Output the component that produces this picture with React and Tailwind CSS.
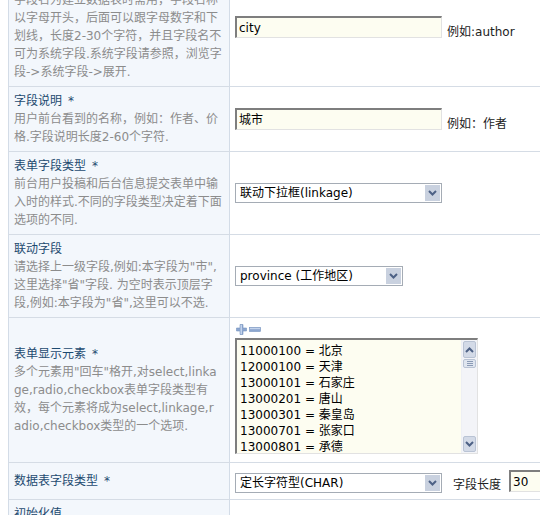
import React from "react";

const rows = [
  {
    title: "字段名",
    star: true,
    desc: [
      "字段名为建立数据表时需用，字段名称",
      "以字母开头，后面可以跟字母数字和下",
      "划线，长度2-30个字符，并且字段名不",
      "可为系统字段.系统字段请参照，浏览字",
      "段->系统字段->展开.",
    ],
    field: "name",
  },
  {
    title: "字段说明",
    star: true,
    desc: ["用户前台看到的名称，例如：作者、价", "格.字段说明长度2-60个字符."],
    field: "label",
  },
  {
    title: "表单字段类型",
    star: true,
    desc: [
      "前台用户投稿和后台信息提交表单中输",
      "入时的样式.不同的字段类型决定着下面",
      "选项的不同.",
    ],
    field: "formtype",
  },
  {
    title: "联动字段",
    desc: [
      "请选择上一级字段,例如:本字段为\"市\",",
      "这里选择\"省\"字段. 为空时表示顶层字",
      "段,例如:本字段为\"省\",这里可以不选.",
    ],
    field: "parent",
  },
  {
    title: "表单显示元素",
    star: true,
    desc: [
      "多个元素用\"回车\"格开,对select,linka",
      "ge,radio,checkbox表单字段类型有",
      "效，每个元素将成为select,linkage,r",
      "adio,checkbox类型的一个选项.",
    ],
    field: "options",
  },
  { title: "数据表字段类型", star: true, desc: [], field: "dbtype", pad: "py-[9px]" },
  { title: "初始化值", desc: ["字段的默认值,可以为空."], field: "none" },
];

const options = [
  "11000100 = 北京",
  "12000100 = 天津",
  "13000101 = 石家庄",
  "13000201 = 唐山",
  "13000301 = 秦皇岛",
  "13000701 = 张家口",
  "13000801 = 承德",
  "13000901 = 沧州",
];

function Chevron({ up }) {
  return (
    <svg width="9" height="6" viewBox="0 0 9 6">
      <path
        d={up ? "M1 5 L4.5 1.5 L8 5" : "M1 1 L4.5 4.5 L8 1"}
        fill="none"
        stroke="#4d6185"
        strokeWidth="2"
      />
    </svg>
  );
}

function TextBox({ value, width }) {
  return (
    <div
      className={`h-[22px] shrink-0 bg-[#fdfdf1] border-t-2 border-l-2 border-t-[#7e7e7e] border-l-[#7e7e7e] border-b border-r border-b-[#e2e2e2] border-r-[#e2e2e2] pl-[2px] flex items-center text-black ${width}`}
    >
      {value}
    </div>
  );
}

function DropDown({ value, width }) {
  return (
    <div className={`h-[20px] shrink-0 border border-[#a5acb5] bg-white flex items-center ${width}`}>
      <span className="flex-1 pl-[4px] whitespace-nowrap text-black">{value}</span>
      <div className="w-[17px] h-[18px] border border-white bg-[#c9d1df] flex items-center justify-center">
        <Chevron />
      </div>
    </div>
  );
}

function PlusMinus() {
  return (
    <div className="h-[15px] flex items-start gap-[2px] pl-[1px] pt-[1px]">
      <svg width="11" height="11" viewBox="0 0 11 11">
        <path d="M4 0.5 H7 V4 H10.5 V7 H7 V10.5 H4 V7 H0.5 V4 H4 Z" fill="#8ca6cf" stroke="#7693c0" strokeWidth="0.6" />
        <rect x="4.5" y="1" width="1.5" height="9" fill="#c3d3ec" />
      </svg>
      <svg width="12" height="11" viewBox="0 0 12 11">
        <rect x="0.5" y="3.5" width="11" height="4" fill="#8ca6cf" stroke="#7693c0" strokeWidth="0.6" />
        <rect x="1" y="4" width="10" height="1.2" fill="#c3d3ec" />
      </svg>
    </div>
  );
}

function OptionsBox() {
  return (
    <div className="w-[243px] h-[116px] flex bg-[#fdfdf1] border-t-2 border-l-2 border-t-[#7e7e7e] border-l-[#7e7e7e] border-b border-r border-b-[#e2e2e2] border-r-[#e2e2e2] overflow-hidden">
      <div className="flex-1 pl-[3px] pt-[3px] leading-[16px] text-black overflow-hidden">
        {options.map((o) => (
          <div key={o} className="whitespace-nowrap">{o}</div>
        ))}
      </div>
      {/* scrollbar */}
      <div className="w-[16px] flex flex-col bg-[#f3f4f8] border-l border-[#eef0f5]">
        <div className="h-[17px] m-[1px] rounded-[2px] border border-[#b9c3d4] bg-[#d3dae7] flex items-center justify-center">
          <Chevron up />
        </div>
        <div className="h-[9px] mx-[1px] rounded-[2px] border border-[#b9c3d4] bg-[#dfe5ef] flex flex-col items-center justify-center gap-[1px]">
          <div className="w-[6px] h-px bg-[#8a9ab5]" />
          <div className="w-[6px] h-px bg-[#8a9ab5]" />
          <div className="w-[6px] h-px bg-[#8a9ab5]" />
        </div>
        <div className="flex-1" />
        <div className="h-[16px] m-[1px] rounded-[2px] border border-[#b9c3d4] bg-[#d3dae7] flex items-center justify-center">
          <Chevron />
        </div>
      </div>
    </div>
  );
}

function Field({ field }) {
  if (field === "name")
    return (
      <div className="flex items-center gap-[5px]">
        <TextBox value="city" width="w-[207px]" />
        <span className="pt-[9px] whitespace-nowrap text-[#222]">例如:author</span>
      </div>
    );
  if (field === "label")
    return (
      <div className="flex items-center gap-[5px]">
        <TextBox value="城市" width="w-[207px]" />
        <span className="pt-[9px] whitespace-nowrap text-[#222]">例如：作者</span>
      </div>
    );
  if (field === "formtype") return <DropDown value="联动下拉框(linkage)" width="w-[207px]" />;
  if (field === "parent") return <DropDown value="province (工作地区)" width="w-[168px]" />;
  if (field === "options")
    return (
      <div className="pt-[5px] pb-[8px]">
        <PlusMinus />
        <OptionsBox />
      </div>
    );
  if (field === "dbtype")
    return (
      <div className="flex items-center">
        <div className="pt-[4px]">
          <DropDown value="定长字符型(CHAR)" width="w-[207px]" />
        </div>
        <span className="ml-[11px] mr-[8px] pt-[8px] whitespace-nowrap text-[#222]">字段长度</span>
        <TextBox value="30" width="w-[40px]" />
      </div>
    );
  return null;
}

export default function App() {
  return (
    <div className="w-[540px] h-[515px] overflow-hidden bg-white text-[12px] font-['DejaVu_Sans','Noto_Sans_CJK_SC',sans-serif]">
      <div className="-mt-[32px] ml-[8px] w-[600px]">
        {rows.map((r) => (
          <div key={r.title} className="flex border-b border-[#d5dce5]">
            <div
              className={`w-[222px] shrink-0 border-l border-r border-[#d3dce7] bg-[#f3f7fc] px-[5px] leading-[18px] flex flex-col justify-center ${r.pad || "py-[5px]"}`}
            >
              <div className="text-[#1d4a70] whitespace-nowrap">
                {r.title}
                {r.star && <span className="ml-[6px]">*</span>}
              </div>
              {r.desc.map((d) => (
                <div key={d} className="text-[#8c8c8c] whitespace-nowrap">{d}</div>
              ))}
            </div>
            <div className="flex-1 flex items-center pl-[5px]">
              <Field field={r.field} />
            </div>
          </div>
        ))}
      </div>
    </div>
  );
}
